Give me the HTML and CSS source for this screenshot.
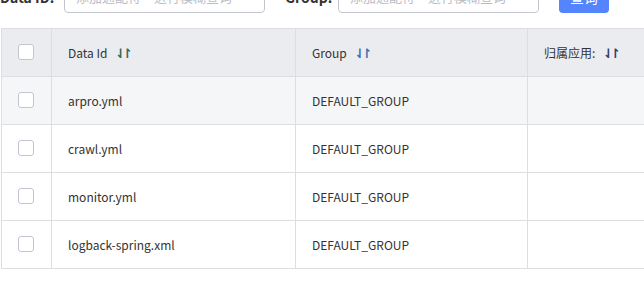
FILE: index.html
```html
<!DOCTYPE html>
<html lang="zh">
<head>
<meta charset="utf-8">
<link rel="stylesheet" href="styles.css">
</head>
<body>
<div class="page">
  <div class="search">
    <label class="lbl">Data ID:</label>
    <div class="input">添加通配符　进行模糊查询</div>
    <label class="lbl lbl-group">Group:</label>
    <div class="input">添加通配符　进行模糊查询</div>
    <button class="btn">查询</button>
  </div>
  <table class="grid">
    <colgroup>
      <col class="c-check"><col class="c-id"><col class="c-group"><col class="c-app">
    </colgroup>
    <thead>
      <tr>
        <th class="chk"><span class="box"></span></th>
        <th>Data Id <span class="sort s1">⇃↾</span></th>
        <th>Group <span class="sort s2">⇃↾</span></th>
        <th>归属应用: <span class="sort s3">⇃↾</span></th>
      </tr>
    </thead>
    <tbody>
      <tr class="hover">
        <td class="chk"><span class="box"></span></td>
        <td>arpro.yml</td><td>DEFAULT_GROUP</td><td></td>
      </tr>
      <tr>
        <td class="chk"><span class="box"></span></td>
        <td>crawl.yml</td><td>DEFAULT_GROUP</td><td></td>
      </tr>
      <tr>
        <td class="chk"><span class="box"></span></td>
        <td>monitor.yml</td><td>DEFAULT_GROUP</td><td></td>
      </tr>
      <tr>
        <td class="chk"><span class="box"></span></td>
        <td>logback-spring.xml</td><td>DEFAULT_GROUP</td><td></td>
      </tr>
    </tbody>
  </table>
</div>
</body>
</html>
```
FILE: styles.css
```css
html, body {
  margin: 0;
  padding: 0;
  background: #fff;
  overflow: hidden;
}
body {
  font-family: "Noto Sans CJK SC", "Noto Sans", sans-serif;
  color: #333;
}
.page {
  width: 900px;
}
.search {
  display: flex;
  align-items: center;
  height: 32px;
  margin-top: -19px;
  margin-bottom: 15px;
}
.lbl {
  font-size: 14px;
  font-weight: bold;
  color: #333;
  width: 64px;
  flex: none;
}
.lbl-group {
  margin-left: 20px;
  width: 53px;
}
.input {
  height: 30px;
  border: 1px solid #c4c6cf;
  border-radius: 4px;
  font-size: 13px;
  line-height: 30px;
  color: #b8bcc6;
  padding-left: 11px;
  box-sizing: content-box;
  width: 188px;
  flex: none;
  white-space: nowrap;
}
.btn {
  margin-left: 20px;
  width: 50px;
  height: 32px;
  border: none;
  border-radius: 4px;
  background: #5584ff;
  color: #fff;
  font-family: inherit;
  font-size: 14px;
  padding: 0;
}
.grid {
  margin-left: 1px;
  border-collapse: collapse;
  table-layout: fixed;
  width: 900px;
  font-size: 12px;
}
.c-check { width: 50px; }
.c-id { width: 244px; }
.c-group { width: 232px; }
.c-app { width: 374px; }
.grid th, .grid td {
  border: 1px solid #dcdee3;
  height: 48px;
  padding: 0 0 1px 16px;
  text-align: left;
  font-weight: normal;
  color: #333;
  box-sizing: border-box;
}
.grid th {
  background: #ebecf0;
}
.grid tr.hover td {
  background: #f5f6f8;
}
.box {
  display: block;
  width: 14px;
  height: 14px;
  border: 1px solid #c4c6cf;
  border-radius: 3px;
  background: #fff;
}
.sort {
  margin-left: 5px;
  font-size: 13px;
  font-weight: bold;
  letter-spacing: -4px;
  font-family: "DejaVu Sans", sans-serif;
}
.s1 { color: #2f6e55; }
.s2 { color: #3f6fb0; }
.s3 { color: #2f3f6a; }
```
